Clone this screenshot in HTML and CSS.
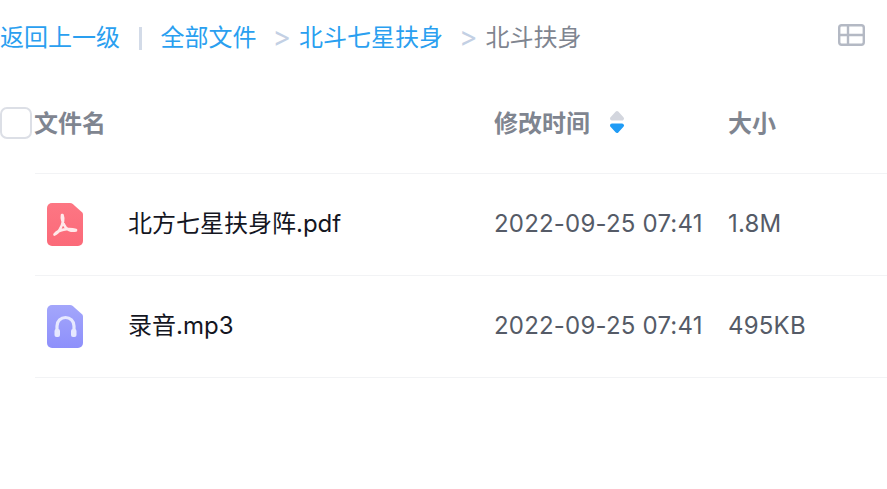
FILE: index.html
```html
<!DOCTYPE html>
<html lang="zh-CN">
<head>
    <meta charset="UTF-8">
    <meta name="viewport" content="width=device-width, initial-scale=1.0">
    <title>北斗扶身</title>
    <link rel="stylesheet" href="styles.css">
</head>
<body>
    <div class="crumbs">
        <a class="crumb-link">返回上一级</a>
        <span class="crumb-bar"></span>
        <a class="crumb-link">全部文件</a>
        <span class="crumb-sep">&gt;</span>
        <a class="crumb-link">北斗七星扶身</a>
        <span class="crumb-sep">&gt;</span>
        <span class="crumb-current">北斗扶身</span>
        <svg class="view-icon" width="27" height="22" viewBox="0 0 27 22" fill="none" stroke="#b4b9c4" stroke-width="2.4">
            <rect x="1.2" y="1.2" width="24.6" height="19.6" rx="2.5"/>
            <path d="M1.2 11H25.8M10 1.2V20.8"/>
        </svg>
    </div>

    <div class="table-head">
        <span class="checkbox"></span>
        <span class="head-name">文件名</span>
        <span class="head-time">修改时间
            <svg class="sort-icon" width="16" height="24" viewBox="0 0 16 24">
                <path d="M8 3L13 8.5H3Z" fill="#d3d6de" stroke="#d3d6de" stroke-width="4" stroke-linejoin="round"/>
                <path d="M8 21L13 15.5H3Z" fill="#1f9bf5" stroke="#1f9bf5" stroke-width="4" stroke-linejoin="round"/>
            </svg>
        </span>
        <span class="head-size">大小</span>
    </div>

    <div class="file-row">
        <svg class="file-icon" width="38" height="44" viewBox="0 0 38 44">
            <defs>
                <linearGradient id="pdfFill" x1="0" y1="0" x2="0" y2="1">
                    <stop offset="0" stop-color="#fd7683"/>
                    <stop offset="1" stop-color="#fb6a79"/>
                </linearGradient>
            </defs>
            <path d="M6 0H24C25 0 26 .4 26.8 1.1L36 9.2C36.700 9.900 37 10.700 37 11.600V38A5 5 0 0 1 32 43H6A5 5 0 0 1 1 38V5A5 5 0 0 1 6 0Z" fill="url(#pdfFill)"/>
            <path d="M16 12C15 17 18 22 20 25C23 28 27 28 30 27.5M16.5 12C18 16 17 21 14 26C12.5 29 10 31 8.5 31.5M8.5 31.5C12 27 22 24.5 30 27" fill="none" stroke="#ffe9ea" stroke-width="2.6" stroke-linecap="round"/>
        </svg>
        <span class="file-name">北方七星扶身阵.pdf</span>
        <span class="file-time">2022-09-25 07:41</span>
        <span class="file-size">1.8M</span>
    </div>
    <div class="file-row">
        <svg class="file-icon" width="38" height="44" viewBox="0 0 38 44">
            <defs>
                <linearGradient id="audioFill" x1="0" y1="0" x2="0" y2="1">
                    <stop offset="0" stop-color="#a3a6fb"/>
                    <stop offset="1" stop-color="#8e90fb"/>
                </linearGradient>
            </defs>
            <path d="M6 0H24C25 0 26 .4 26.8 1.1L36 9.2C36.7 9.9 37 10.7 37 11.6V38A5 5 0 0 1 32 43H6A5 5 0 0 1 1 38V5A5 5 0 0 1 6 0Z" fill="url(#audioFill)"/>
            <path d="M11 27V21A8.500 8.500 0 0 1 28 21V27" fill="none" stroke="#e6e8ff" stroke-width="3.2"/>
            <rect x="8.5" y="24" width="5.5" height="8" rx="2" fill="#e6e8ff"/>
            <rect x="25" y="24" width="5.5" height="8" rx="2" fill="#e6e8ff"/>
        </svg>
        <span class="file-name">录音.mp3</span>
        <span class="file-time">2022-09-25 07:41</span>
        <span class="file-size">495KB</span>
    </div>
</body>
</html>
```

FILE: styles.css
```css
body {
    margin: 0;
    font-family: Inter, "Noto Sans CJK SC", sans-serif;
    font-size: 24px;
    background: #fff;
    overflow: hidden;
}
.crumbs {
    display: flex;
    align-items: center;
    height: 74px;
}
.crumb-link,
.crumb-current {
    margin-bottom: 4px;
}
.crumb-link {
    color: #2a9ff0;
}
.crumb-bar {
    width: 2.5px;
    height: 23px;
    margin: 3px 19px 0 19px;
    background: #d3dbe8;
}
.crumb-sep {
    margin: 0 8px 0 16px;
    font-size: 28px;
    line-height: 24px;
    color: #c3d0e4;
}
.crumb-current {
    color: #7f8590;
}
.view-icon {
    margin-left: auto;
    margin-right: 22px;
    margin-top: -4px;
}
.table-head {
    display: grid;
    grid-template-columns: 34px 460px 234px 1fr;
    align-items: center;
    height: 99px;
    font-weight: 700;
    color: #7f8590;
}
.checkbox {
    width: 28px;
    height: 28px;
    border: 2px solid #dcdfe6;
    border-radius: 7px;
    margin-bottom: 2px;
}
.head-name,
.head-time,
.head-size {
    margin-bottom: 4px;
}
.head-time {
    display: flex;
    align-items: center;
    gap: 18px;
}
.sort-icon {
    margin-left: 1px;
}
.file-row {
    display: grid;
    grid-template-columns: 94px 366px 233px 1fr;
    align-items: center;
    height: 101px;
    margin-left: 35px;
    border-top: 1px solid #f2f3f5;
}
.file-row:last-child {
    border-bottom: 1px solid #f2f3f5;
}
.file-icon {
    margin-left: 11px;
}
.file-name {
    margin-bottom: 7px;
    margin-left: -1px;
    color: #14161f;
}
.file-time,
.file-size {
    margin-bottom: 2px;
    color: #555b67;
    letter-spacing: 0.2px;
}
.file-time {
    margin-left: -1px;
}
```
